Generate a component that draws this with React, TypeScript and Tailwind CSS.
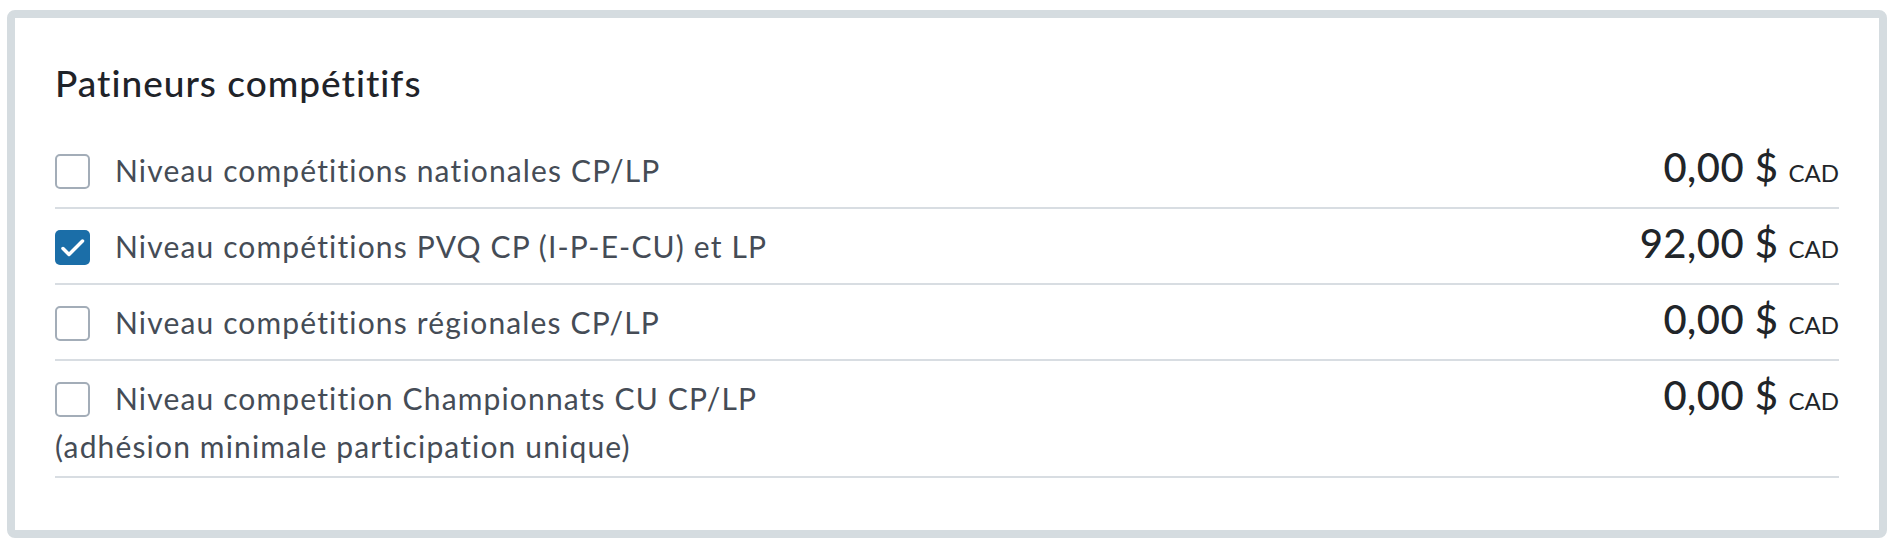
type Option = {
  label: string;
  note?: string;
  price: string;
  checked?: boolean;
};

const options: Option[] = [
  { label: 'Niveau compétitions nationales CP/LP', price: '0,00' },
  { label: 'Niveau compétitions PVQ CP (I-P-E-CU) et LP', price: '92,00', checked: true },
  { label: 'Niveau compétitions régionales CP/LP', price: '0,00' },
  {
    label: 'Niveau competition Championnats CU CP/LP',
    note: '(adhésion minimale participation unique)',
    price: '0,00',
  },
];

function Box({ checked }: { checked?: boolean }) {
  if (checked) {
    return (
      <span className="inline-flex items-center justify-center w-[35px] h-[35px] rounded-[5px] bg-[#1b6ea8] mr-[25px] align-[-7px]">
        <svg width="35" height="35" viewBox="0 0 35 35" fill="none">
          <path d="M8 18.5L14 24.5L27.5 11" stroke="white" strokeWidth="3.5" strokeLinecap="round" strokeLinejoin="round" />
        </svg>
      </span>
    );
  }
  return (
    <span className="inline-block w-[35px] h-[35px] rounded-[5px] border-2 border-[#a3adb8] bg-white mr-[25px] align-[-7px]" />
  );
}

function App() {
  return (
    <div className="min-h-screen bg-white pt-[10px] pl-[7px]" style={{ fontFamily: 'Lato, "Open Sans", sans-serif' }}>
      <div className="w-[1880px] h-[528px] border-8 border-[#d5dce0] rounded-[8px] px-[40px] pt-[41px]">
        <h2 className="text-[37px] leading-[48px] tracking-[1px] font-medium text-[#1f2329]">Patineurs compétitifs</h2>

        <div className="mt-[26px]">
          {options.map((opt, i) => (
            <div
              key={opt.label}
              className={`flex items-baseline justify-between border-b-2 border-[#d8dde2] pt-[13px] ${i === options.length - 1 ? 'pb-[6px]' : 'pb-[13px]'}`}
            >
              <label className="text-[30px] leading-[48px] tracking-[1.15px] text-[#454c56]">
                <Box checked={opt.checked} />
                {opt.label}
                {opt.note && (
                  <>
                    <br />
                    {opt.note}
                  </>
                )}
              </label>
              <div className="flex items-baseline gap-[10px] text-[#212529]">
                <span className="text-[40px] leading-[40px] font-medium tracking-[0.5px]">{opt.price} $</span>
                <span className="text-[24px] leading-none">CAD</span>
              </div>
            </div>
          ))}
        </div>
      </div>
    </div>
  );
}

export default App;
